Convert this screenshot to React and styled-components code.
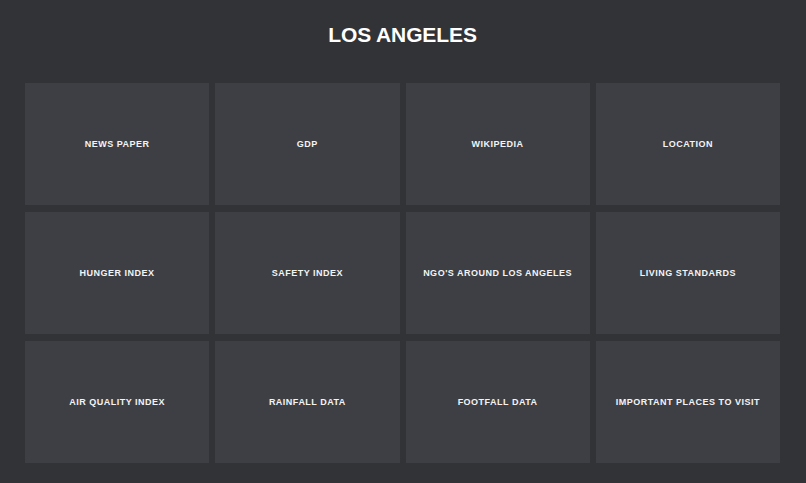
import React from "react";
import styled, { createGlobalStyle } from "styled-components";

const GlobalStyle = createGlobalStyle`
  html, body {
    margin: 0;
    padding: 0;
    background-color: #323337;
  }
  body {
    font-family: "Liberation Sans", Arial, Helvetica, sans-serif;
  }
`;

const Page = styled.main`
  min-height: 483px;
  padding: 24px 26px 20px 25px;
  box-sizing: border-box;
  background-color: #323337;
`;

const Title = styled.h1`
  margin: 0 0 38px 0;
  font-size: 21px;
  line-height: 21px;
  font-weight: 700;
  color: #ffffff;
  text-align: center;
  letter-spacing: -0.1px;
`;

const Grid = styled.div`
  display: grid;
  grid-template-columns: repeat(4, 1fr);
  grid-auto-rows: 122px;
  column-gap: 6px;
  row-gap: 7px;
`;

const Tile = styled.div`
  display: flex;
  align-items: center;
  justify-content: center;
  background-color: #3e3f44;
  color: #f4f4f4;
  font-size: 9px;
  font-weight: 700;
  letter-spacing: 0.5px;
  text-transform: uppercase;
  text-align: center;
  cursor: pointer;
`;

const items = [
  "News Paper",
  "GDP",
  "Wikipedia",
  "Location",
  "Hunger Index",
  "Safety Index",
  "NGO's around Los Angeles",
  "Living Standards",
  "Air Quality Index",
  "Rainfall Data",
  "Footfall Data",
  "Important places to visit",
];

const App = () => {
  return (
    <>
      <GlobalStyle />
      <Page>
        <Title>LOS ANGELES</Title>
        <Grid>
          {items.map((item, index) => (
            <Tile key={index}>{item}</Tile>
          ))}
        </Grid>
      </Page>
    </>
  );
};

export default App;
